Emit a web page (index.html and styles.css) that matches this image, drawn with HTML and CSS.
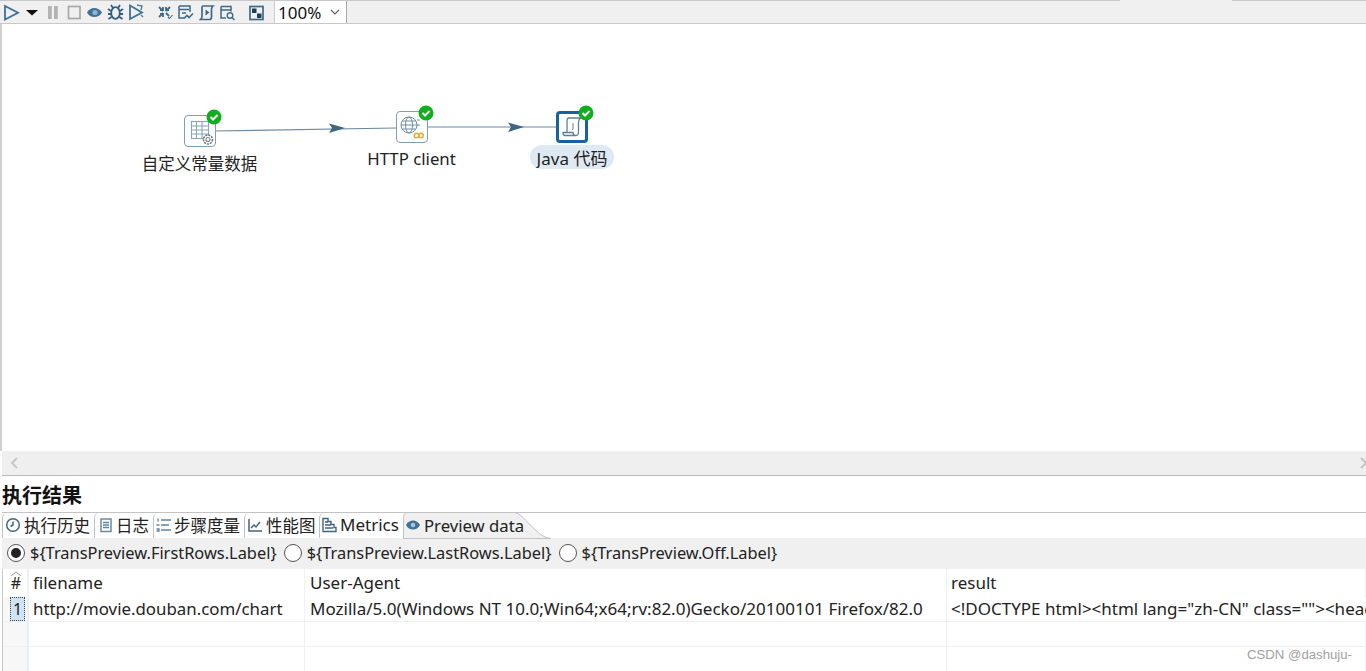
FILE: index.html
```html
<!DOCTYPE html>
<html lang="zh-CN">
<head>
<meta charset="utf-8">
<title>执行结果</title>
<link rel="stylesheet" href="styles.css">
</head>
<body>
<div class="app">
  <div class="toolbar">
    <div class="tab-strip"></div>
    <div class="tools">
      <svg class="tool-icons" width="271" height="23" viewBox="0 0 271 23">
        <path d="M5 6v13.500l13-6.800z" fill="none" stroke="#3f7298" stroke-width="1.800"/>
        <path d="M26 10h12l-6 5.500z" fill="#111"/>
        <path d="M48 6h3.800v13H48zM54 6h3.800v13H54z" fill="#b3b3b3"/>
        <rect x="68.500" y="6.500" width="11.500" height="12" fill="none" stroke="#a8a8a8" stroke-width="1.700"/>
        <path d="M87 12.500c3-6 11.500-6 15 0-3.500 6-12 6-15 0z" fill="#3f7298"/>
        <circle cx="95" cy="12.500" r="2.600" fill="#8fb3cc"/>
        <g fill="none" stroke="#2f5f80" stroke-width="1.800">
          <ellipse cx="115.500" cy="13" rx="4.300" ry="5.800"/>
          <path d="M113 8l-2-3M118 8l2-3M111 11l-3-2M120 11l3-2M111 14h-3M120 14h3M111.500 17l-3 2M119.500 17l3 2"/>
          <path d="M130 5.500v13.500l12-6.500z" stroke="#3f7298" stroke-width="1.800"/>
          <path d="M137 5l5 1-1 4M141 15l2 2" stroke="#4d7f9f" stroke-width="1.400"/>
        </g>
        <g fill="none" stroke="#3d6a8a" stroke-width="1.700">
          <path d="M159 7l4 4M170 7l-4 4M159 17l4-4M169 16l-3-3M163 7v3h-3M166 7v3h3M163 17v-3h-3" stroke-width="1.800"/>
          <path d="M168 17l1.500 1.500 3-3.500" stroke-width="1.100"/>
          <path d="M179 6h11v6M179 6v12h5M179 9.500h10M182 13h4" stroke-width="1.500"/>
          <path d="M184 18.500l3-3 2 2 4-4" stroke-width="1.600"/>
          <path d="M203 6h10c-1 1-1.500 2-1.500 3v8c0 2-1 2.500-2 2.500h-9c1-1 1.500-1.500 1.500-3V8c0-1 0-2 1-2z" stroke-width="1.700"/>
          <path d="M205.500 9.500l4 3-4 3z" fill="#3d6a8a" stroke="none"/>
          <path d="M221 6.500h10v5M221 6.500v11.500h5M221 10h10" stroke-width="1.500"/>
          <circle cx="230" cy="15.500" r="2.800" stroke-width="1.400"/>
          <path d="M232 17.500l2.500 2.500" stroke-width="1.500"/>
          <rect x="250" y="6.500" width="13" height="13" stroke-width="1.700"/>
        </g>
        <path d="M252 8.500h4.500v4.500H252zM257 13.500h4.500v4.500H257z" fill="#1f3f55"/>
      </svg>
      <div class="zoom-box">
        <span>100%</span>
        <svg class="zoom-arrow" width="10" height="6" viewBox="0 0 10 6"><path d="M1 1l4 4 4-4" fill="none" stroke="#666" stroke-width="1.200"/></svg>
      </div>
    </div>
  </div>

  <div class="canvas">
    <svg class="hops" width="700" height="200" viewBox="0 0 700 200">
      <path d="M214 107l182-3" stroke="#6b8aa3" stroke-width="1.200" fill="none"/>
      <path d="M329 99.500l16 4.500-16 5 3-5z" fill="#3f6583"/>
      <path d="M427 103h129" stroke="#6b8aa3" stroke-width="1.200" fill="none"/>
      <path d="M508 98.500l16 4.500-16 5 3-5z" fill="#3f6583"/>
    </svg>

    <div class="node node-a">
      <div class="node-box">
        <svg width="30" height="30" viewBox="0 0 30 30" fill="none" stroke="#8aa4b8" stroke-width="1.100">
          <rect x="6.500" y="5.500" width="17" height="17"/>
          <path d="M6.500 10h17M6.500 14h17M6.500 18h17M11.500 5.500v17M17 5.500v17"/>
          <circle cx="23" cy="23.500" r="4.500" fill="#fff" stroke="#6a6f73" stroke-width="1.500" stroke-dasharray="2 1"/>
          <circle cx="23" cy="23.500" r="2" fill="#fff" stroke="#7a8187"/>
        </svg>
      </div>
      <svg class="check" width="16" height="16" viewBox="0 0 16 16"><circle cx="8" cy="8" r="7.500" fill="#0fae1c"/><path d="M4.500 8l2.500 2.500 4.500-4.500" fill="none" stroke="#fff" stroke-width="2"/></svg>
      <div class="node-label label-a">自定义常量数据</div>
    </div>

    <div class="node node-b">
      <div class="node-box">
        <svg width="30" height="30" viewBox="0 0 30 30" fill="none" stroke="#6f8da5" stroke-width="1">
          <circle cx="12" cy="13" r="8"/>
          <ellipse cx="12" cy="13" rx="3.500" ry="8"/>
          <path d="M4 13h16M5.500 9h13M5.500 17h13M20 8h3M20 13h3"/>
          <circle cx="19.500" cy="23.500" r="2.300" stroke="#f0a732" stroke-width="1.500"/>
          <circle cx="24" cy="23.500" r="2.300" stroke="#f0a732" stroke-width="1.500"/>
        </svg>
      </div>
      <svg class="check" width="16" height="16" viewBox="0 0 16 16"><circle cx="8" cy="8" r="7.500" fill="#0fae1c"/><path d="M4.500 8l2.500 2.500 4.500-4.500" fill="none" stroke="#fff" stroke-width="2"/></svg>
      <div class="node-label label-b">HTTP client</div>
    </div>

    <div class="node node-c">
      <div class="node-box selected">
        <svg width="26" height="26" viewBox="0 0 26 26" fill="none" stroke="#5f7f98" stroke-width="1.300">
          <path d="M10 4h12c-2 1-2.500 2-2.500 4v10c0 2-1 3.500-3 3.500H6c-1.500 0-2-1.500-2-3h10c0 1.500 1 3 2.500 3"/>
          <path d="M10 4C8.500 4 8 5 8 7v11.500"/>
          <path d="M14 9v6l-1 1" stroke-width="1"/>
        </svg>
      </div>
      <svg class="check" width="16" height="16" viewBox="0 0 16 16"><circle cx="8" cy="8" r="7.500" fill="#0fae1c"/><path d="M4.500 8l2.500 2.500 4.500-4.500" fill="none" stroke="#fff" stroke-width="2"/></svg>
      <div class="node-label label-selected">Java 代码</div>
    </div>
  </div>

  <div class="hscroll">
    <svg width="10" height="12" viewBox="0 0 10 12"><path d="M8 1L3 6l5 5" fill="none" stroke="#c6c6c6" stroke-width="2"/></svg>
    <svg width="10" height="12" viewBox="0 0 10 12"><path d="M2 1l5 5-5 5" fill="none" stroke="#c6c6c6" stroke-width="2"/></svg>
  </div>

  <div class="results">
    <h2 class="results-title">执行结果</h2>
    <div class="tabs">
      <div class="tab tab-1">
        <svg width="16" height="16" viewBox="0 0 16 16" fill="none" stroke="#3f6583" stroke-width="1.500"><circle cx="8" cy="8" r="6.300"/><path d="M8 4.500V8l-2.500 1.500"/></svg>
        <span>执行历史</span>
      </div>
      <div class="tab tab-2">
        <svg width="14" height="16" viewBox="0 0 14 16" fill="none" stroke="#5d84a1" stroke-width="1.400"><rect x="2" y="2" width="10" height="12.500"/><path d="M4 5.500h6M4 8h6M4 10.500h6"/></svg>
        <span>日志</span>
      </div>
      <div class="tab tab-3">
        <svg width="15" height="16" viewBox="0 0 15 16" fill="none" stroke="#5d84a1" stroke-width="1.300"><path d="M5 3h10M5 8h8M5 13h10M2 1.500v3M.5 8h3M.5 12h2.500v2H.5"/></svg>
        <span>步骤度量</span>
      </div>
      <div class="tab tab-4">
        <svg width="16" height="16" viewBox="0 0 16 16" fill="none" stroke="#3f6583" stroke-width="1.500"><path d="M2 2v12h13"/><path d="M4 11l3-3 2 2 4-5"/></svg>
        <span>性能图</span>
      </div>
      <div class="tab tab-5">
        <svg width="16" height="16" viewBox="0 0 16 16" fill="none" stroke="#3f6583" stroke-width="1.400"><path d="M2 1.500h5v3h3v3h3v3h2v4H2z"/><path d="M4 5h3M4 8h6M4 11h8"/></svg>
        <span>Metrics</span>
      </div>
      <div class="tab-active">
        <svg class="tab-curve" width="148" height="27" viewBox="0 0 148 27"><path d="M.5 27V6C.5 2 2 .5 5 .5h105c8 0 12 8 20 15 5 5 10 10 18 11H.5z" fill="#f0f0f0" stroke="#c3c3c3"/></svg>
        <svg class="tab-eye" width="16" height="12" viewBox="0 0 16 12"><path d="M1 6c3-6 11-6 14 0-3 6-11 6-14 0z" fill="#3f7298"/><circle cx="8" cy="6" r="2.300" fill="#a9c6da"/></svg>
        <span>Preview data</span>
      </div>
    </div>

    <div class="radios">
      <label class="radio"><span class="dot on"></span>${TransPreview.FirstRows.Label}</label>
      <label class="radio"><span class="dot"></span>${TransPreview.LastRows.Label}</label>
      <label class="radio"><span class="dot"></span>${TransPreview.Off.Label}</label>
    </div>

    <div class="grid">
      <div class="cell head num"><svg class="sort" width="12" height="5" viewBox="0 0 12 5"><path d="M1 5l5-4 5 4" fill="none" stroke="#999"/></svg>#</div>
      <div class="cell head">filename</div>
      <div class="cell head">User-Agent</div>
      <div class="cell head">result</div>

      <div class="cell num"><span class="row-mark">1</span></div>
      <div class="cell col-file">http://movie.douban.com/chart</div>
      <div class="cell">Mozilla/5.0(Windows NT 10.0;Win64;x64;rv:82.0)Gecko/20100101 Firefox/82.0</div>
      <div class="cell clip">&lt;!DOCTYPE html&gt;&lt;html lang="zh-CN" class=""&gt;&lt;head&gt;&lt;meta charset="utf-8"&gt;</div>

      <div class="cell num"></div><div class="cell"></div><div class="cell"></div><div class="cell"></div>
      <div class="cell num"></div><div class="cell"></div><div class="cell"></div><div class="cell"></div>
    </div>
  </div>
  <div class="watermark">CSDN @dashuju-</div>
</div>
</body>
</html>
```
FILE: styles.css
```css
* { box-sizing: border-box; }
html, body { margin: 0; height: 100%; overflow: hidden; background: #fff; }
body {
  font-family: "Noto Sans", "Noto Sans CJK SC", sans-serif;
  font-size: 16px;
  color: #222;
}
.app { position: relative; width: 1366px; height: 671px; display: flex; flex-direction: column; overflow: hidden; }

.toolbar { height: 24px; background: #f0f0f0; border-bottom: 1px solid #c8c8c8; position: relative; flex: none; }
.tab-strip { height: 1px; background: linear-gradient(90deg, #c8c8c8 0 1120px, transparent 1120px 1232px, #c8c8c8 1232px); }
.tools { display: flex; align-items: flex-start; height: 22px; }
.tool-icons { margin-top: -1px; flex: none; margin-right: 3px; }
.zoom-box {
  width: 73px; height: 22px; background: #fff;
  border-left: 1px solid #ccc; border-right: 1px solid #a8a8a8;
  display: flex; align-items: center; justify-content: space-between;
  padding: 0 6px 0 3px; font-size: 17px; color: #111;
}
.zoom-arrow { flex: none; }

.canvas { position: relative; height: 427px; flex: none; background: #fff; border-left: 2px solid #d0d0d0; }
.hops { position: absolute; left: -2px; top: 0; }
.node { position: absolute; width: 140px; display: flex; flex-direction: column; align-items: center; }
.node-a { left: 128px; top: 91px; }
.node-b { left: 340px; top: 87px; }
.node-c { left: 500px; top: 87px; }
.node-box {
  width: 32px; height: 32px; background: #fff;
  border: 1px solid #7f9db5; border-radius: 4px;
  display: flex; align-items: center; justify-content: center;
}
.node-box.selected { border: 3px solid #1a5f9e; }
.check { position: absolute; left: 76px; top: -6px; }
.node-label { line-height: 24px; white-space: nowrap; color: #222; }
.label-a { margin: 5px 1px 0 0; font-size: 16.5px; }
.label-b { margin: 4px 1px 0 0; font-size: 16.8px; }
.label-selected {
  background: #dfe9f3; border-radius: 12px; padding: 0 7px; margin-top: 2px;
  height: 24px; line-height: 28px; font-size: 17px; overflow: hidden;
}

.hscroll { height: 25px; flex: none; background: #efefef; border-bottom: 1px solid #b9b9c4; display: flex; align-items: center; justify-content: space-between; padding: 0 0 0 7px; margin-left: 2px; }
.hscroll svg:last-child { margin-right: -3px; }

.results { flex: 1; display: flex; flex-direction: column; min-height: 0; }
.results-title { margin: 0; height: 36px; padding: 7px 0 0 2px; font-size: 20px; line-height: 26px; font-weight: 700; color: #111; }
.tabs { height: 26px; flex: none; margin-left: 2px; display: flex; border-top: 1px solid #c3c3c3; position: relative; }
.tab {
  display: flex; align-items: center; gap: 3px; height: 25px;
  border-left: 1px solid #c3c3c3; border-radius: 5px 0 0 0; padding: 0 0 2px 2px;
  white-space: nowrap; flex: none; font-size: 16.5px;
}
.tab-1 { width: 92px; }
.tab-2 { width: 59px; padding-left: 4px; }
.tab-3 { width: 91px; }
.tab-4 { width: 75px; }
.tab-5 { width: 84px; padding-left: 1px; font-size: 17px; }
.tab-active {
  position: relative; width: 148px; height: 26px; flex: none;
  display: flex; align-items: center; gap: 3px; padding-left: 2px; margin-top: -1px; font-size: 16.7px;
}
.tab-curve { position: absolute; left: 0; top: 0; }
.tab-eye, .tab-active span { position: relative; }

.radios { height: 31px; flex: none; background: #f0f0f0; margin-left: 2px; display: flex; align-items: center; gap: 7px; padding: 0 0 2px 5px; }
.radio { display: flex; align-items: center; gap: 5px; white-space: nowrap; font-size: 16.4px; }
.dot { width: 18px; height: 18px; border-radius: 50%; background: #fff; border: 1px solid #555; display: inline-block; position: relative; }
.dot.on::after { content: ""; position: absolute; inset: 3px; border-radius: 50%; background: #222; }

.grid {
  flex: 1; margin-left: 2px; border-left: 1px solid #c8c8c8;
  display: grid; grid-template-columns: 26px 276px 642px 1fr; grid-auto-rows: 25px; grid-template-rows: 28px;
  overflow: hidden; min-height: 0;
}
.cell {
  padding-left: 5px; line-height: 24px; white-space: nowrap; overflow: hidden;
  border-right: 1px solid #edf1f6; border-bottom: 1px solid #f0f0f2; font-size: 17px;
}
.cell:nth-child(4n+2), .cell:nth-child(4n+4) { padding-left: 4px; }
.cell.col-file { font-size: 16.85px; }
.cell.head { line-height: 28px; border-bottom: 0; border-right: 1px solid #f2f2f2; }
.cell.num { padding: 0 0 0 2px; position: relative; text-align: center; background: #f7f7f7; border-right: 2px solid #e8eef6; font-size: 16px; }
.cell.head.num { background: #fff; border-right-color: #f0f0f0; }
.sort { position: absolute; left: 7px; top: 2px; }
.row-mark { display: block; width: 15px; height: 24px; margin-left: 5px; background: #cfe3f5; border: 1px dotted #444; line-height: 22px; }
.clip { border-right: 0; }

.watermark { position: absolute; right: 14px; bottom: 9px; font-family: "Liberation Sans", sans-serif; font-size: 13.2px; color: #a0a0a0; }
```
